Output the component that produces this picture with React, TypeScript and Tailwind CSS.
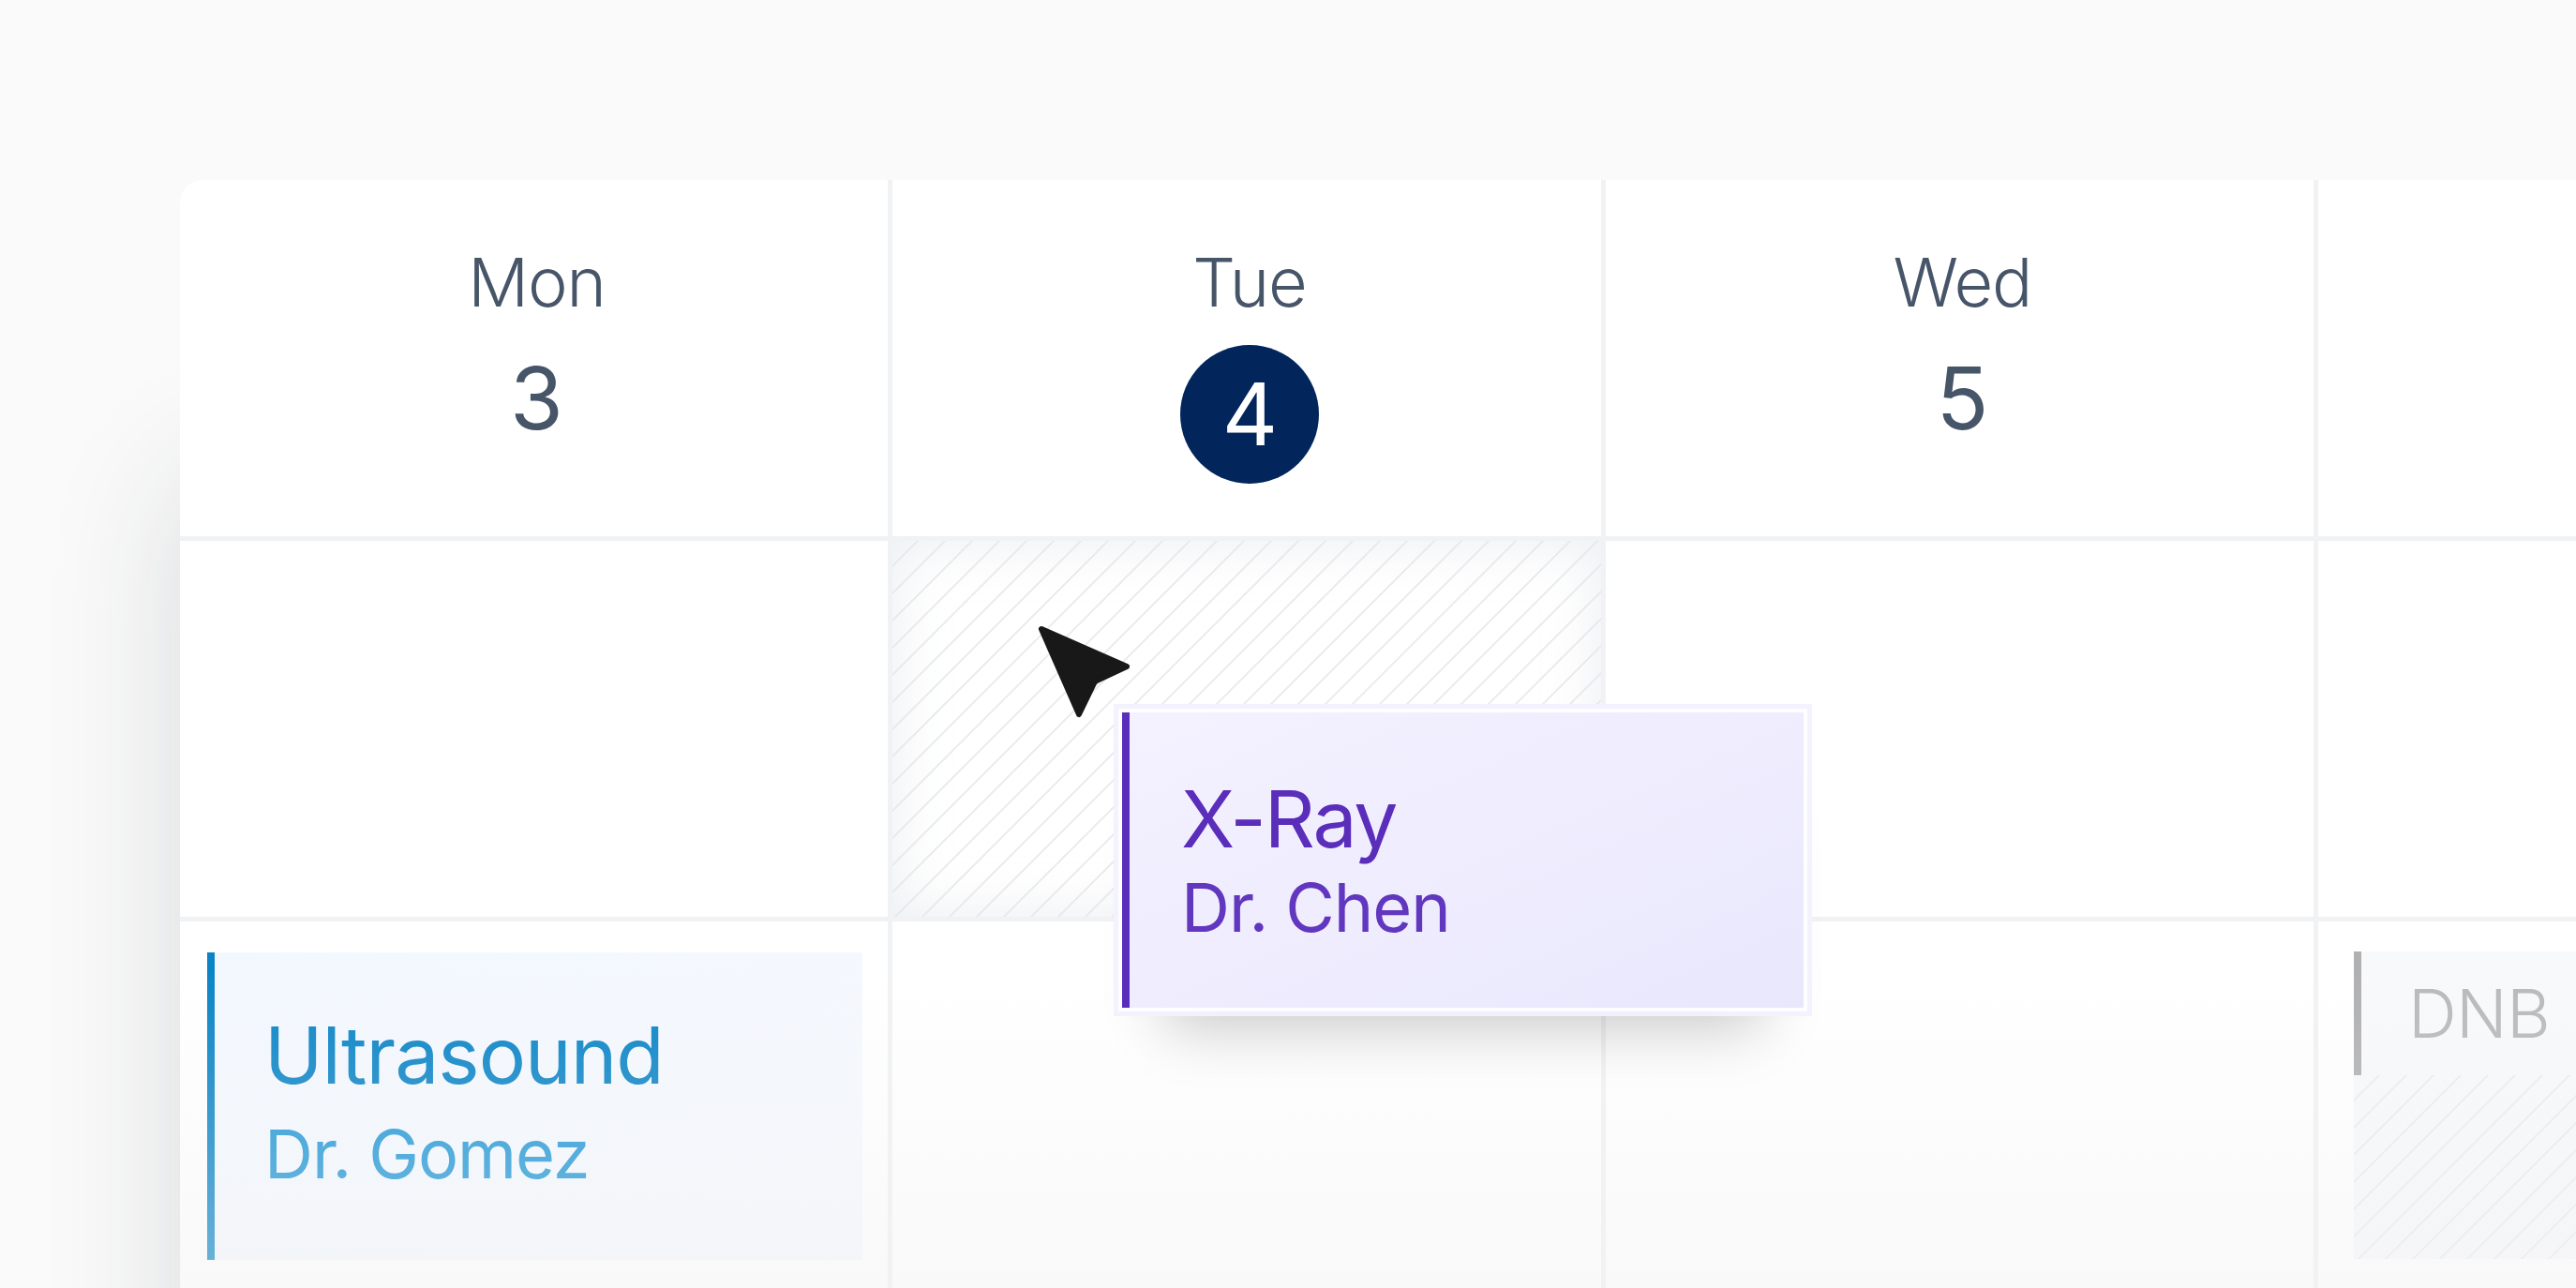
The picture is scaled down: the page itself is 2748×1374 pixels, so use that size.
const hatch =
  'bg-[repeating-linear-gradient(135deg,transparent_0,transparent_18px,#ecedef_18px,#ecedef_20.5px)]';

const DayHead = ({ day, date, today = false }: { day: string; date: string; today?: boolean }) => (
  <div className="flex h-[380px] flex-col items-center bg-white pl-[6px] pt-[65px] text-[#475569]">
    <div className="text-[72px] font-light leading-[88px] tracking-[-0.015em]">{day}</div>
    {today ? (
      <div className="mt-[23px] flex h-[148px] w-[148px] items-center justify-center rounded-full bg-[#02265c] pl-[1px] text-[92px] font-normal leading-none text-white">
        {date}
      </div>
    ) : (
      <div className="mt-[24px] text-[92px] font-normal leading-[112px]">{date}</div>
    )}
  </div>
);

export default function App() {
  return (
    <div className="relative h-[1374px] w-[2748px] overflow-hidden bg-[#fafafa] pl-[192px] pt-[192px] font-['Inter',sans-serif]">
      <div className="relative w-[2700px] overflow-hidden rounded-tl-[24px] shadow-[-24px_290px_140px_-30px_rgba(30,41,59,0.16)]">
        <div className="grid grid-cols-[755px_756px_755px_755px] grid-rows-[380px_401px_392px] gap-[5px] bg-[#f1f2f4]">
          <DayHead day="Mon" date="3" />
          <DayHead day="Tue" date="4" today />
          <DayHead day="Wed" date="5" />
          <div className="bg-white" />

          <div className="bg-white" />
          <div className={`bg-white ${hatch} shadow-[inset_0_0_60px_rgba(226,229,235,0.7)]`} />
          <div className="bg-white" />
          <div className="bg-white" />

          <div className="bg-white pl-[29px] pr-[27px] pt-[33px]">
            <div className="flex h-[328px] flex-col justify-center border-l-[8px] border-[#0a84c6] bg-gradient-to-br from-[#f3f8ff] to-[#f6f9fe] pb-[8px] pl-[53px]">
              <div className="text-[84px] font-normal leading-[100px] tracking-[-0.012em] text-[#0a84c6]">Ultrasound</div>
              <div className="mt-[10px] text-[72px] font-normal leading-[90px] tracking-[-0.015em] text-[#1f96d5]">Dr. Gomez</div>
            </div>
          </div>
          <div className="bg-white" />
          <div className="bg-white" />
          <div className="bg-white pl-[38px] pt-[32px]">
            <div className="h-[328px] bg-[#f8f9fb]">
              <div className="flex h-[132px] items-center border-l-[8px] border-[#b0b0b0] pl-[50px] text-[72px] font-light tracking-[-0.01em] text-[#b9b9b9]">
                DNB
              </div>
              <div className={`h-[196px] ${hatch}`} />
            </div>
          </div>
        </div>
        <div className="pointer-events-none absolute inset-x-0 bottom-0 h-[344px] bg-gradient-to-b from-transparent to-[#f1f1f1]/45" />
      </div>

      {/* dragged event */}
      <div className="absolute left-[1197px] top-[760px] flex h-[315px] w-[727px] flex-col justify-center border-l-[8px] border-[#5a2dba] bg-gradient-to-br from-[#f4f2ff] to-[#e9e7fc] pl-[55px] shadow-[0_0_0_4px_rgba(255,255,255,0.85),0_0_0_9px_rgba(243,241,254,0.95),0_65px_60px_-45px_rgba(0,0,0,0.22)]">
        <div className="text-[84px] font-normal leading-[100px] tracking-[-0.025em] text-[#5a2dba]">X-Ray</div>
        <div className="text-[72px] font-normal leading-[88px] tracking-[-0.015em] text-[#6237bf]">Dr. Chen</div>
      </div>

      {/* cursor */}
      <svg className="absolute left-[1100px] top-[660px]" width="120" height="120" viewBox="0 0 120 120">
        <path
          d="M11 11 L102 51 L70 66 Q68 67 67 69 L51 102 Z"
          fill="#181818"
          stroke="#181818"
          strokeWidth="6"
          strokeLinejoin="round"
        />
      </svg>
    </div>
  );
}
